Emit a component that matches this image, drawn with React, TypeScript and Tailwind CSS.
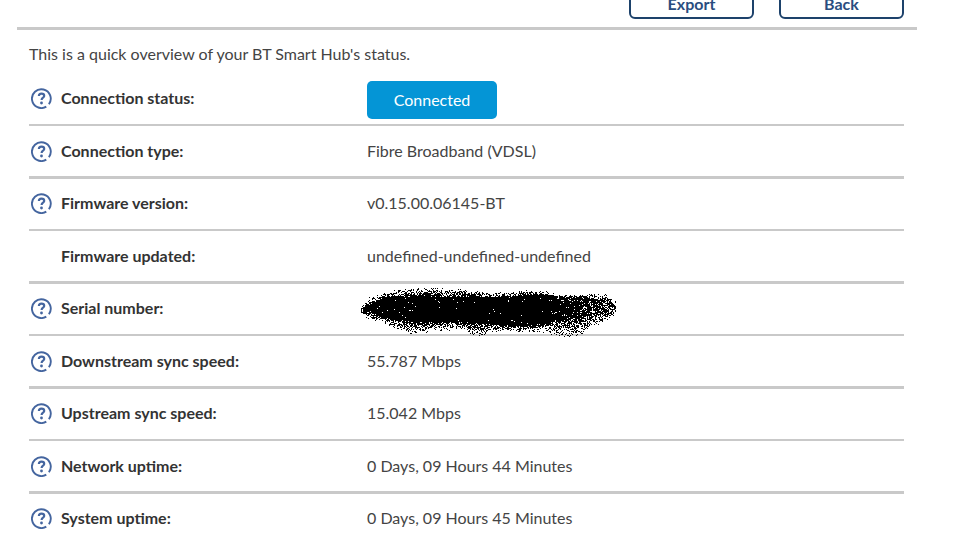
import { useMemo } from "react";

const rows = [
  { label: "Connection status:", value: "Connected", help: true, kind: "badge" },
  { label: "Connection type:", value: "Fibre Broadband (VDSL)", help: true },
  { label: "Firmware version:", value: "v0.15.00.06145-BT", help: true },
  { label: "Firmware updated:", value: "undefined-undefined-undefined", help: false },
  { label: "Serial number:", value: "", help: true, kind: "redacted" },
  { label: "Downstream sync speed:", value: "55.787 Mbps", help: true },
  { label: "Upstream sync speed:", value: "15.042 Mbps", help: true },
  { label: "Network uptime:", value: "0 Days, 09 Hours 44 Minutes", help: true },
  { label: "System uptime:", value: "0 Days, 09 Hours 45 Minutes", help: true }
];

// x, outer top, core top, core bottom, outer bottom
const sprayShape = [
  [0, 18, 20, 20, 25],
  [8, 9, 17, 23, 32],
  [20, 5, 11, 28, 34],
  [33, 2, 9, 31, 39],
  [50, 0, 8, 33, 46],
  [67, 0, 8, 33, 44],
  [83, 0, 9, 33, 42],
  [100, 1, 9, 33, 42],
  [117, 3, 9, 35, 48],
  [133, 4, 9, 35, 43],
  [150, 4, 9, 37, 43],
  [167, 1, 6, 37, 43],
  [183, 2, 8, 35, 45],
  [200, 6, 9, 31, 48],
  [217, 6, 9, 29, 48],
  [233, 6, 11, 25, 38],
  [247, 6, 14, 21, 32],
  [255, 14, 20, 20, 25]
];

function sprayPath() {
  let seed = 4711;
  const random = () => {
    seed = (seed * 48271) % 2147483647;
    return seed / 2147483647;
  };
  let d = "";
  for (let x = 0; x < 255; x++) {
    const i = sprayShape.findIndex((p) => p[0] > x);
    const a = sprayShape[i - 1];
    const b = sprayShape[i];
    const t = (x - a[0]) / (b[0] - a[0]);
    const [, top, coreTop, coreBottom, bottom] = a.map((v, k) => v + (b[k] - v) * t);
    const solid = x < 190 ? 0.99 : 0.99 - (x - 190) * 0.004;
    for (let y = 0; y < 50; y++) {
      let chance = 0;
      if (y >= coreTop && y <= coreBottom) chance = solid;
      else if (y >= top && y < coreTop) chance = 0.15 + 0.75 * ((y - top) / (coreTop - top)) ** 1.2;
      else if (y > coreBottom && y <= bottom) chance = 0.16 + 0.7 * ((bottom - y) / (bottom - coreBottom)) ** 1.2;
      if (random() < chance) d += `M${x} ${y}h1v1h-1z`;
    }
  }
  return d;
}

function Spray() {
  const d = useMemo(sprayPath, []);
  return (
    <svg className="absolute -left-1.5 top-1 h-[50px] w-64" viewBox="0 0 256 50" shapeRendering="crispEdges" aria-hidden="true">
      <path d={d} fill="#000" />
    </svg>
  );
}

function HelpIcon() {
  return (
    <svg className="size-[21px]" viewBox="0 0 21 21" fill="none" stroke="#44659f" strokeWidth="1.9" aria-hidden="true">
      <path d="M15.3 18.6a9.4 9.4 0 1 1 2.6-2.4" />
      <path d="M7.9 8.1c0-1.5 1.1-2.4 2.6-2.4s2.7.8 2.7 2.2c0 1.8-2.6 1.9-2.6 4" strokeWidth="2.2" />
      <circle cx="10.5" cy="15" r="1.4" fill="#44659f" stroke="none" />
    </svg>
  );
}

export default function App() {
  return (
    <main className="mr-[63px] ml-[17px] font-['Lato',sans-serif] text-[16px] leading-6 text-[#444]">
      <header className="-mt-3 flex justify-end gap-[25px] border-b-3 border-[#c9c9c9] pr-[13px] pb-2">
        {["Export", "Back"].map((name) => (
          <button
            key={name}
            type="button"
            className="flex h-[31px] w-[125px] items-center justify-center rounded-md border-2 border-[#1d426b] bg-white font-bold text-[#2a4d80]"
          >
            {name}
          </button>
        ))}
      </header>

      <section className="pr-[13px] pl-3">
        <p className="pt-3 pb-2">This is a quick overview of your BT Smart Hub's status.</p>
        <table className="w-full table-fixed border-separate border-spacing-0">
          <tbody>
            {rows.map((row) => (
              <tr key={row.label} className="group h-[52px] even:h-[53px]">
                <th scope="row" className="w-[338px] border-b-2 border-[#c9c9c9] p-0 text-left font-bold text-[#333] group-odd:pb-0.5 group-even:border-b-3">
                  <div className="flex items-center gap-[9px] pl-0.5">
                    {row.help ? (
                      <button type="button" aria-label={`Help: ${row.label}`}>
                        <HelpIcon />
                      </button>
                    ) : (
                      <span className="w-[21px]" />
                    )}
                    {row.label}
                  </div>
                </th>
                <td className="relative border-b-2 border-[#c9c9c9] p-0 group-odd:pb-0.5 group-even:border-b-3">
                  {row.kind === "badge" && (
                    <span className="mt-1 flex h-[38px] w-[130px] items-center justify-center rounded-[5px] bg-[#0495d6] text-white">
                      {row.value}
                    </span>
                  )}
                  {row.kind === "redacted" && <Spray />}
                  {!row.kind && row.value}
                </td>
              </tr>
            ))}
          </tbody>
        </table>
      </section>
    </main>
  );
}
